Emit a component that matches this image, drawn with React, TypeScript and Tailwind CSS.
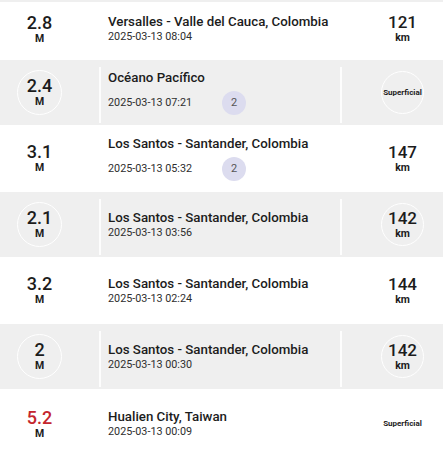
import React from 'react'

type Quake = {
  mag: string
  place: string
  date: string
  depth?: string
  badge?: number
  gray?: boolean
  red?: boolean
  h: string
}

const quakes: Quake[] = [
  { mag: '2.8', place: 'Versalles - Valle del Cauca, Colombia', date: '2025-03-13 08:04', depth: '121', h: 'h-[58px] pb-[4px]' },
  { mag: '2.4', place: 'Océano Pacífico', date: '2025-03-13 07:21', badge: 2, gray: true, h: 'h-[65px]' },
  { mag: '3.1', place: 'Los Santos - Santander, Colombia', date: '2025-03-13 05:32', depth: '147', badge: 2, h: 'h-[67px]' },
  { mag: '2.1', place: 'Los Santos - Santander, Colombia', date: '2025-03-13 03:56', depth: '142', gray: true, h: 'h-[65px]' },
  { mag: '3.2', place: 'Los Santos - Santander, Colombia', date: '2025-03-13 02:24', depth: '144', h: 'h-[67px]' },
  { mag: '2', place: 'Los Santos - Santander, Colombia', date: '2025-03-13 00:30', depth: '142', gray: true, h: 'h-[65px]' },
  { mag: '5.2', place: 'Hualien City, Taiwan', date: '2025-03-13 00:09', red: true, h: 'h-[65px] pt-[5px]' },
]

function QuakeRow({ q }: { q: Quake }) {
  return (
    <div className={`flex items-center ${q.h} ${q.gray ? 'bg-[#efefef]' : 'bg-white'}`}>
      {/* magnitude */}
      <div className="w-[79px] shrink-0 flex justify-center">
        <div className="w-[45px] h-[45px] rounded-full border-[1.5px] border-white flex flex-col items-center justify-center">
          <span className={`text-[18px] leading-none font-medium ${q.red ? 'text-[#c4262e]' : 'text-[#1c1c1c]'}`}>{q.mag}</span>
          <span className="mt-[2px] text-[10.5px] leading-none font-bold text-[#1c1c1c]">M</span>
        </div>
      </div>
      <div className="w-[20px] shrink-0" />
      <div className="self-stretch w-[2px] shrink-0 mt-[7px] mb-[2px] bg-white/90" />

      {/* place + date */}
      <div className="flex-1 min-w-0 pl-[7px] flex flex-col">
        <span className="text-[13.3px] leading-[16px] font-medium text-[#1c1c1c] whitespace-nowrap">{q.place}</span>
        {q.badge ? (
          <div className="mt-[5px] flex items-center">
            <span className="w-[114px] text-[10.8px] leading-[14px] text-[#2e2e2e]">{q.date}</span>
            <span className="w-[24px] h-[24px] rounded-full bg-[#dcdcef] flex items-center justify-center text-[11px] text-[#555]">
              {q.badge}
            </span>
          </div>
        ) : (
          <span className="text-[10.8px] leading-[14px] text-[#2e2e2e]">{q.date}</span>
        )}
      </div>

      <div className="self-stretch w-[2px] shrink-0 mt-[7px] mb-[2px] bg-white/90" />
      {/* depth */}
      <div className="w-[101px] shrink-0 pl-[20px] flex justify-center">
        <div className="w-[43px] h-[43px] rounded-full border-[1.5px] border-white flex flex-col items-center justify-center">
          {q.depth ? (
            <>
              <span className="text-[17px] leading-none font-medium text-[#1c1c1c]">{q.depth}</span>
              <span className="mt-[2px] text-[10.5px] leading-none font-bold text-[#1c1c1c]">km</span>
            </>
          ) : (
            <span className="text-[8px] leading-none font-bold text-[#1c1c1c] whitespace-nowrap">Superficial</span>
          )}
        </div>
      </div>
    </div>
  )
}

export default function App() {
  return (
    <div className="w-[443px] h-[450px] overflow-hidden bg-white" style={{ fontFamily: 'Roboto, "Liberation Sans", sans-serif' }}>
      <div className="h-[2px] bg-[#efefef]" />
      {quakes.map((q, i) => (
        <QuakeRow key={i} q={q} />
      ))}
    </div>
  )
}
